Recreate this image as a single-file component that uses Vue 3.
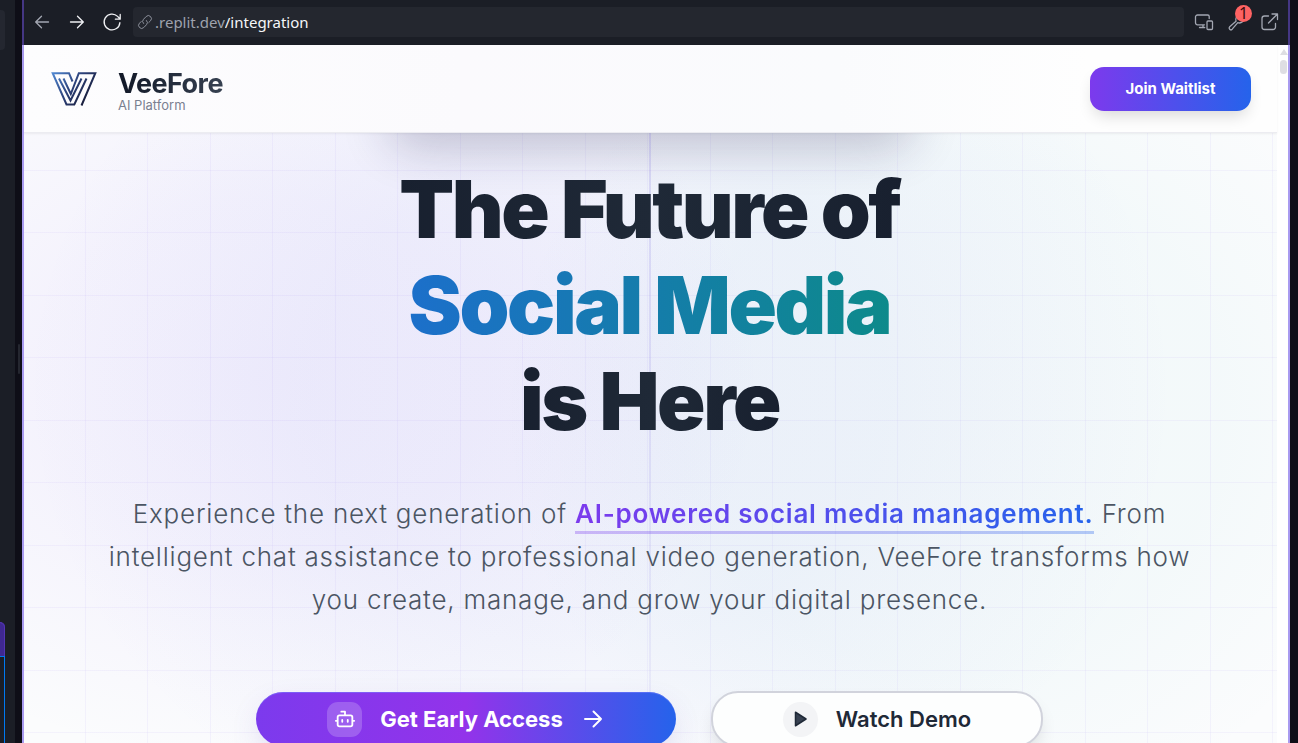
<script setup>
const headline = [
  { text: 'The Future of', accent: false },
  { text: 'Social Media', accent: true },
  { text: 'is Here', accent: false },
]
</script>

<template>
  <div class="workspace">
    <aside class="side">
      <div class="side-tab"></div>
      <div class="side-card"><div class="side-card-body"></div></div>
    </aside>
    <div class="divider"><span class="grip"></span></div>

    <section class="preview">
      <div class="toolbar">
        <button class="tool dim" aria-label="Back">
          <svg width="20" height="20" viewBox="0 0 20 20"><path d="M16.5 10H4M9.5 4.2L3.7 10l5.8 5.8" /></svg>
        </button>
        <button class="tool" aria-label="Forward">
          <svg width="20" height="20" viewBox="0 0 20 20"><path d="M3.5 10H16M10.5 4.2l5.8 5.8-5.8 5.8" /></svg>
        </button>
        <button class="tool" aria-label="Reload">
          <svg width="20" height="20" viewBox="0 0 20 20"><path d="M17.9 10.6A7.9 7.9 0 1 1 15.6 4.4L17.9 6.7M18.2 2.4V7.2H13.4" /></svg>
        </button>
        <div class="address">
          <svg class="link" width="16" height="16" viewBox="0 0 16 16"><path d="M6.500 9.500a3 3 0 0 1 0-4.200L9.200 2.500a3 3 0 0 1 4.300 4.300L11.800 8.500M9.500 6.500a3 3 0 0 1 0 4.200L6.800 13.500a3 3 0 0 1-4.300-4.300L4.200 7.500" /></svg>
          <label class="host" for="path">.replit.dev</label>
          <input id="path" class="path" type="text" value="/integration" />
        </div>
        <button class="tool dim" aria-label="Devices">
          <svg width="20" height="20" viewBox="0 0 20 20"><path d="M10.500 12.800H3.500a2 2 0 0 1-2-2V5a2 2 0 0 1 2-2h10.200a1.500 1.500 0 0 1 1.500 1.500V6.500M9 12.800v2.500M5.500 15.500h5.200M14 9h3.500a1 1 0 0 1 1 1v6.500a1 1 0 0 1-1 1H14a1 1 0 0 1-1-1V10a1 1 0 0 1 1-1z" /></svg>
        </button>
        <button class="tool dim tools" aria-label="Developer tools, 1 issue">
          <svg width="20" height="20" viewBox="0 0 20 20"><path d="M16.800 7.500a4.600 4.600 0 0 1-6 3.200L5.200 17.200a1.700 1.700 0 0 1-2.500-2.500L9 9.200a4.600 4.600 0 0 1 3.200-6" /></svg>
          <span class="count">1</span>
        </button>
        <button class="tool dim" aria-label="Open in new tab">
          <svg width="20" height="20" viewBox="0 0 20 20"><path d="M8.500 4H4.500a2.500 2.500 0 0 0-2.500 2.500v8.500a2.500 2.500 0 0 0 2.500 2.500h8.500a2.500 2.500 0 0 0 2.500-2.500V11.500M8.500 11L17.500 2M12 2h5.500v5.500" /></svg>
        </button>
      </div>

      <div class="viewport">
        <div class="page">
          <header class="header">
            <a class="brand" href="#">
              <svg class="logo" width="46" height="34" viewBox="0 0 46 34">
                <defs>
                  <linearGradient id="mark" x1="0" y1="0" x2="1" y2="0.6">
                    <stop offset="0" stop-color="#4f86d0" />
                    <stop offset="0.5" stop-color="#2d437c" />
                    <stop offset="1" stop-color="#171a35" />
                  </linearGradient>
                </defs>
                <path fill="none" stroke="url(#mark)" stroke-width="2" d="M30.500 33.500L44.300 1.200H27.800L19.800 22L12.500 6.500M21.500 9.500L18 1.200H1.700L15.500 32.500H23.300L35.500 6.500M8 6.500L19.500 28.500L30.500 6.500" />
              </svg>
              <span class="brand-text">
                <strong>VeeFore</strong>
                <small>AI Platform</small>
              </span>
            </a>
            <button class="join">Join Waitlist</button>
          </header>

          <main class="hero">
            <div class="badge-shadow"></div>
            <div class="axis"></div>
            <h1>
              <span v-for="line in headline" :key="line.text" :class="{ accent: line.accent }">{{ line.text }}</span>
            </h1>
            <p class="lead">
              Experience the next generation of <strong>AI-powered social media management.</strong> From intelligent
              chat assistance to professional video generation, VeeFore transforms how you create, manage, and grow your
              digital presence.
            </p>
            <div class="actions">
              <button class="cta primary">
                <span class="chip">
                  <svg width="22" height="22" viewBox="0 0 24 24"><path d="M12 8V4H8M6 8h12a2 2 0 0 1 2 2v8a2 2 0 0 1-2 2H6a2 2 0 0 1-2-2v-8a2 2 0 0 1 2-2zM2 14h2M20 14h2M15 13v2M9 13v2" /></svg>
                </span>
                Get Early Access
                <svg class="arrow" width="24" height="24" viewBox="0 0 24 24"><path d="M4 12h16M12.500 4.500L20 12l-7.500 7.500" /></svg>
              </button>
              <button class="cta secondary">
                <span class="chip round">
                  <svg width="18" height="18" viewBox="0 0 24 24"><path d="M6 3l14 9-14 9z" /></svg>
                </span>
                Watch Demo
              </button>
            </div>
          </main>
        </div>
        <div class="scrollbar"><span class="up"></span><span class="thumb"></span></div>
      </div>
    </section>
  </div>
</template>

<style>
body {
  background: #0e0e17;
}
</style>

<style scoped>
* {
  box-sizing: border-box;
}
button {
  border: 0;
  padding: 0;
  font-family: inherit;
  cursor: pointer;
}
.workspace {
  display: flex;
  height: 100vh;
  overflow: hidden;
  padding-right: 8px;
  background: #0e0e17;
  font-family: Inter, "Liberation Sans", sans-serif;
}
.side {
  display: flex;
  flex-direction: column;
  justify-content: space-between;
  width: 15px;
  padding-top: 10px;
  background: #1b1e26;
}
.side-tab {
  width: 5px;
  height: 40px;
  border-radius: 0 4px 4px 0;
  background: #242730;
}
.side-card {
  width: 5px;
  height: 121px;
  padding-top: 33px;
  border-radius: 0 8px 0 0;
  border-top: 1px solid #5335b5;
  background: #3f2891;
  box-shadow: inset -1px 0 #5335b5;
}
.side-card-body {
  height: 100%;
  border-top: 1px solid #0079f2;
  border-right: 1px solid #0079f2;
  background: #1b1e26;
}
.divider {
  display: flex;
  align-items: center;
  justify-content: center;
  width: 7px;
  padding-bottom: 25px;
}
.grip {
  width: 2px;
  height: 30px;
  border-radius: 1px;
  background: #252730;
}
.preview {
  flex: 1;
  min-width: 0;
  display: flex;
  flex-direction: column;
}
.toolbar {
  display: flex;
  align-items: center;
  height: 45px;
  padding: 0 8px 2px;
  border: solid #453784;
  border-width: 0 2px;
  background: #1b1e26;
}
.tool {
  position: relative;
  display: flex;
  margin-right: 15px;
  background: none;
  color: #f0f1f4;
}
.tool.dim {
  color: #a3a7b2;
}
.tool:last-child {
  margin-right: 0;
}
.tool svg,
.link {
  fill: none;
  stroke: currentColor;
  stroke-width: 1.3;
  stroke-linecap: round;
  stroke-linejoin: round;
}
.tool:nth-child(3) {
  margin-right: 11px;
}
.tool:nth-child(5),
.tool:nth-child(6) {
  margin-right: 13px;
}
.address {
  flex: 1;
  display: flex;
  align-items: center;
  height: 30px;
  margin-right: 10px;
  padding-left: 4px;
  border-radius: 4px;
  background: #24272f;
}
.link {
  color: #8d919c;
  stroke-width: 1;
}
.host,
.path {
  font: 15px/20px "Noto Sans", sans-serif;
}
.host {
  margin-left: 2px;
  color: #9ea2ad;
}
.path {
  flex: 1;
  min-width: 0;
  padding: 0;
  border: 0;
  outline: 0;
  background: none;
  color: #f5f6f8;
}
.count {
  position: absolute;
  top: -7px;
  right: -5px;
  width: 17px;
  height: 17px;
  border-radius: 50%;
  background: #ff6363;
  color: #3a0d10;
  font: 16px/17px "Noto Sans", sans-serif;
  text-align: center;
}
.viewport {
  flex: 1;
  min-height: 0;
  display: flex;
  border: solid #a99bf0;
  border-width: 0 2px;
  background: #fff;
}
.page {
  flex: 1;
  min-width: 0;
  display: flex;
  flex-direction: column;
}
.header {
  position: relative;
  z-index: 1;
  display: flex;
  align-items: center;
  justify-content: space-between;
  height: 88px;
  flex-shrink: 0;
  padding: 0 26px 0 27px;
  border-bottom: 1px solid #ececf1;
  background: linear-gradient(90deg, #fdfdfe, #fbfafd 35%, #fafbfd 65%, #fefefe 85%);
  box-shadow: 0 1px 2px rgba(0, 0, 0, 0.06);
}
.brand {
  display: flex;
  align-items: center;
  gap: 21px;
  color: inherit;
  text-decoration: none;
}
.brand-text {
  display: flex;
  flex-direction: column;
  padding-top: 2px;
}
.brand-text strong {
  font-size: 27px;
  line-height: 30px;
  font-weight: 700;
  letter-spacing: -0.02em;
  background: linear-gradient(90deg, #111827, #374151);
  background-clip: text;
  color: transparent;
}
.brand-text small {
  font-size: 13px;
  line-height: 12px;
  color: #7a8090;
}
.join {
  width: 161px;
  height: 44px;
  border-radius: 14px;
  background: linear-gradient(90deg, #7c3aed, #2563eb);
  box-shadow: 0 8px 16px -4px rgba(0, 0, 0, 0.16);
  color: #fff;
  font-size: 15px;
  font-weight: 700;
}
.hero {
  position: relative;
  flex: 1;
  display: flex;
  flex-direction: column;
  align-items: center;
  min-height: 0;
  padding: 28px 2px 0 0;
  overflow: hidden;
  background:
    linear-gradient(90deg, rgba(124, 92, 237, 0.06) 1px, transparent 1px 62px, rgba(124, 92, 237, 0.06) 62px 63px, transparent 63px) 61px 0 / 125px 125px,
    linear-gradient(rgba(124, 92, 237, 0.06) 1px, transparent 1px 62px, rgba(124, 92, 237, 0.06) 62px 63px, transparent 63px) 0 37px / 125px 125px,
    radial-gradient(ellipse 40% 64% at 19% 40%, rgba(139, 92, 246, 0.08), rgba(139, 92, 246, 0.06) 45%, transparent),
    radial-gradient(ellipse 46% 80% at 46% 42%, rgba(89, 80, 230, 0.06), rgba(79, 100, 230, 0.05) 50%, transparent),
    radial-gradient(ellipse 36% 70% at 74% 46%, rgba(20, 150, 160, 0.03), rgba(20, 160, 170, 0.03) 60%, transparent),
    #fbfcfd;
}
.badge-shadow {
  position: absolute;
  top: -64px;
  left: 29%;
  right: 29%;
  height: 56px;
  border-radius: 28px;
  box-shadow: 0 22px 48px rgba(30, 27, 75, 0.24);
}
.axis {
  position: absolute;
  top: 0;
  bottom: 0;
  left: 50%;
  width: 2px;
  margin-left: -2px;
  background: linear-gradient(rgba(124, 110, 220, 0.2), rgba(124, 110, 220, 0.08));
}
h1 {
  position: relative;
  margin: 0;
  font-size: 80px;
  line-height: 96px;
  font-weight: 900;
  letter-spacing: -0.03em;
  text-align: center;
}
h1 span {
  display: block;
  width: fit-content;
  margin: 0 auto;
  padding: 0 4px;
  background: linear-gradient(90deg, #18202f, #1f2937 50%, #18202f);
  background-clip: text;
  color: transparent;
}
h1 .accent {
  background: linear-gradient(90deg, #1c6fcb, #0d8a8a);
  background-clip: text;
}
.lead {
  position: relative;
  max-width: 1100px;
  margin: 43px 0 70px;
  color: #4b5563;
  font-size: 26px;
  line-height: 43px;
  font-weight: 300;
  letter-spacing: 0.03em;
  text-align: center;
}
.lead strong {
  font-weight: 600;
  padding-bottom: 2px;
  border-bottom: 3px solid;
  border-image: linear-gradient(90deg, rgba(124, 58, 237, 0.32), rgba(37, 99, 235, 0.32)) 1;
  background: linear-gradient(90deg, #7c3aed, #2563eb);
  background-clip: text;
  color: transparent;
}
.actions {
  position: relative;
  display: flex;
  align-items: center;
  gap: 35px;
}
.cta {
  display: flex;
  align-items: center;
  justify-content: center;
  gap: 18px;
  height: 54px;
  border-radius: 27px;
  font-size: 22px;
  font-weight: 600;
  white-space: nowrap;
}
.primary {
  width: 420px;
  background: linear-gradient(90deg, #7c3aed, #9333ea 50%, #2563eb);
  box-shadow: 0 12px 32px -8px rgba(90, 60, 180, 0.25), inset 0 1px rgba(120, 130, 255, 0.5);
  color: #fff;
  font-weight: 700;
}
.secondary {
  width: 332px;
  height: 56px;
  border: 2px solid #d1d3dc;
  background: #fdfefe;
  box-shadow: 0 10px 20px -6px rgba(0, 0, 0, 0.16);
  color: #1f2937;
}
.chip {
  display: flex;
  align-items: center;
  justify-content: center;
  width: 35px;
  height: 35px;
  border-radius: 11px;
  background: rgba(255, 255, 255, 0.2);
}
.cta svg {
  fill: none;
  stroke: currentColor;
  stroke-width: 2;
  stroke-linecap: round;
  stroke-linejoin: round;
}
.chip.round {
  border-radius: 50%;
  background: #f3f4f6;
}
.chip.round svg {
  fill: #374151;
}
.scrollbar {
  display: flex;
  flex-direction: column;
  align-items: center;
  gap: 5px;
  width: 11px;
  padding: 4px 0 0 2px;
  background: #fff;
}
.up {
  border: 4px solid transparent;
  border-top: 0;
  border-bottom: 6px solid #dedee3;
}
.thumb {
  width: 7px;
  height: 14px;
  border-radius: 4px;
  background: #dedee3;
}
</style>
